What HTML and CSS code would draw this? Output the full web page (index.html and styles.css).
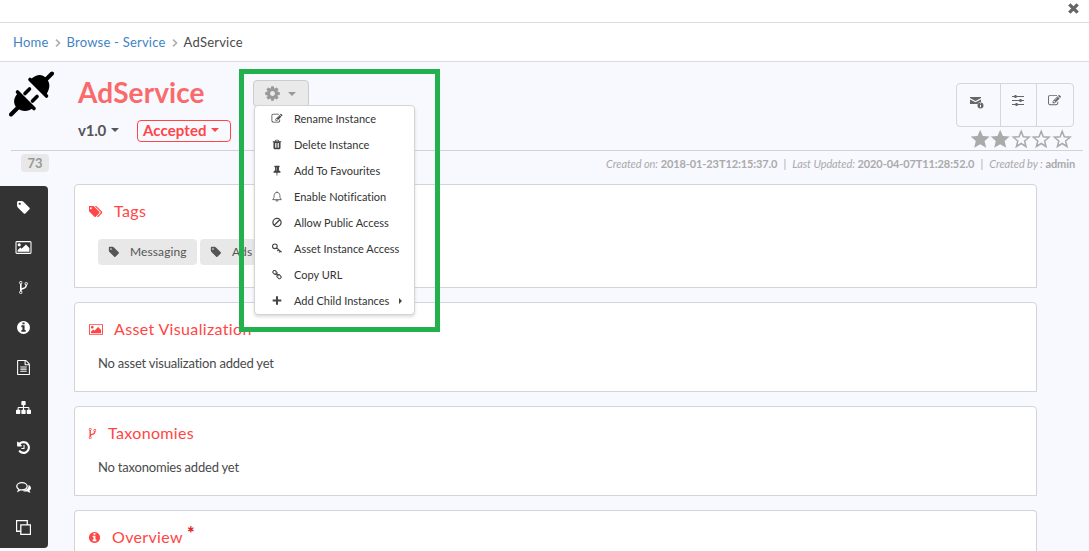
FILE: index.html
```
<!DOCTYPE html>
<html lang="en">
<head>
    <meta charset="UTF-8">
    <meta name="viewport" content="width=device-width, initial-scale=1.0">
    <title>AdService</title>
    <link rel="stylesheet" href="styles.css">
</head>
<body>
    <svg class="sprite">
        <symbol id="tag" viewBox="0 0 1792 1792"><path d="M576 448q0-53-37.500-90.500t-90.500-37.500-90.500 37.500-37.500 90.500 37.500 90.500 90.500 37.500 90.500-37.500 37.500-90.500zm1067 576q0 53-37 90l-491 492q-39 37-91 37-53 0-90-37l-715-716q-38-37-64.500-101t-26.500-117v-416q0-52 38-90t90-38h416q53 0 117 26.500t102 64.500l715 714q37 39 37 91z"/></symbol>
        <symbol id="tags" viewBox="0 0 1920 1792"><path d="M384 448q0-53-37.500-90.500t-90.500-37.500-90.500 37.500-37.500 90.500 37.500 90.500 90.500 37.500 90.500-37.500 37.500-90.500zm1067 576q0 53-37 90l-491 492q-39 37-91 37-53 0-90-37l-715-716q-38-37-64.500-101t-26.500-117v-416q0-52 38-90t90-38h416q53 0 117 26.500t102 64.500l715 714q37 39 37 91zm384 0q0 53-37 90l-491 492q-39 37-91 37-36 0-59-14t-53-45l470-470q37-37 37-90 0-52-37-91l-715-714q-38-38-102-64.500t-117-26.500h224q53 0 117 26.500t102 64.500l715 714q37 39 37 91z"/></symbol>
        <symbol id="image" viewBox="-64 0 1920 1792"><path d="M576 576q0 80-56 136t-136 56-136-56-56-136 56-136 136-56 136 56 56 136zm1024 384v448h-1408v-192l320-320 160 160 512-512zm96-704h-1600q-13 0-22.500 9.500t-9.500 22.500v1216q0 13 9.500 22.500t22.500 9.500h1600q13 0 22.500-9.500t9.500-22.500v-1216q0-13-9.500-22.500t-22.500-9.500zm160 32v1216q0 66-47 113t-113 47h-1600q-66 0-113-47t-47-113v-1216q0-66 47-113t113-47h1600q66 0 113 47t47 113z"/></symbol>
        <symbol id="fork" viewBox="0 0 1792 1792"><path d="M672 1472q0-40-28-68t-68-28-68 28-28 68 28 68 68 28 68-28 28-68zm0-1152q0-40-28-68t-68-28-68 28-28 68 28 68 68 28 68-28 28-68zm640 128q0-40-28-68t-68-28-68 28-28 68 28 68 68 28 68-28 28-68zm96 0q0 52-26 96.500t-70 69.500q-2 287-226 414-67 38-203 81-128 40-169.500 71t-41.500 100v26q44 25 70 69.500t26 96.500q0 80-56 136t-136 56-136-56-56-136q0-52 26-96.500t70-69.500v-820q-44-25-70-69.500t-26-96.500q0-80 56-136t136-56 136 56 56 136q0 52-26 96.500t-70 69.500v497q54-26 154-57 55-17 87.500-29.500t70.500-31 59-39.500 40.500-51 28-69.500 8.500-91.500q-44-25-70-69.500t-26-96.500q0-80 56-136t136-56 136 56 56 136z"/></symbol>
        <symbol id="info" viewBox="0 0 1792 1792"><path d="M1152 1376v-160q0-14-9-23t-23-9h-96v-512q0-14-9-23t-23-9h-320q-14 0-23 9t-9 23v160q0 14 9 23t23 9h96v320h-96q-14 0-23 9t-9 23v160q0 14 9 23t23 9h448q14 0 23-9t9-23zm-128-896v-160q0-14-9-23t-23-9h-192q-14 0-23 9t-9 23v160q0 14 9 23t23 9h192q14 0 23-9t9-23zm640 416q0 209-103 385.500t-279.500 279.500-385.500 103-385.500-103-279.500-279.500-103-385.500 103-385.500 279.500-279.500 385.500-103 385.500 103 279.500 279.500 103 385.500z"/></symbol>
        <symbol id="file" viewBox="0 0 1792 1792"><path d="M1596 380q28 28 48 76t20 88v1152q0 40-28 68t-68 28h-1344q-40 0-68-28t-28-68v-1600q0-40 28-68t68-28h896q40 0 88 20t76 48zm-444-244v376h376q-10-29-22-41l-313-313q-12-12-41-22zm384 1528v-1024h-416q-40 0-68-28t-28-68v-416h-768v1536h1280zm-1024-864q0-14 9-23t23-9h704q14 0 23 9t9 23v64q0 14-9 23t-23 9h-704q-14 0-23-9t-9-23v-64zm736 224q14 0 23 9t9 23v64q0 14-9 23t-23 9h-704q-14 0-23-9t-9-23v-64q0-14 9-23t23-9h704zm0 256q14 0 23 9t9 23v64q0 14-9 23t-23 9h-704q-14 0-23-9t-9-23v-64q0-14 9-23t23-9h704z"/></symbol>
        <symbol id="sitemap" viewBox="0 0 1792 1792"><path d="M1792 1248v320q0 40-28 68t-68 28h-320q-40 0-68-28t-28-68v-320q0-40 28-68t68-28h96v-192h-512v192h96q40 0 68 28t28 68v320q0 40-28 68t-68 28h-320q-40 0-68-28t-28-68v-320q0-40 28-68t68-28h96v-192h-512v192h96q40 0 68 28t28 68v320q0 40-28 68t-68 28h-320q-40 0-68-28t-28-68v-320q0-40 28-68t68-28h96v-192q0-52 38-90t90-38h512v-192h-96q-40 0-68-28t-28-68v-320q0-40 28-68t68-28h320q40 0 68 28t28 68v320q0 40-28 68t-68 28h-96v192h512q52 0 90 38t38 90v192h96q40 0 68 28t28 68z"/></symbol>
        <symbol id="history" viewBox="0 0 1792 1792"><path d="M1664 896q0 156-61 298t-164 245-245 164-298 61q-172 0-327-72.500t-264-204.500q-7-10-6.500-22.500t8.500-20.500l137-138q10-9 25-9 16 2 23 12 73 95 179 147t225 52q104 0 198.500-40.500t163.500-109.500 109.500-163.500 40.500-198.500-40.500-198.500-109.500-163.500-163.500-109.500-198.500-40.500q-98 0-188 35.500t-160 101.500l137 138q31 30 14 69-17 40-59 40h-448q-26 0-45-19t-19-45v-448q0-42 40-59 39-17 69 14l130 129q107-101 244.500-156.500t284.500-55.500q156 0 298 61t245 164 164 245 61 298zm-640-288v448q0 14-9 23t-23 9h-320q-14 0-23-9t-9-23v-64q0-14 9-23t23-9h224v-352q0-14 9-23t23-9h64q14 0 23 9t9 23z"/></symbol>
        <symbol id="comments" viewBox="0 0 14 14"><path d="M5.500 2.500C2.900 2.500.7 3.900.7 5.900c0 1.200.8 2.100 1.900 2.700L2 10.300l2.200-1.200c.4.100.9.100 1.300.1 2.700 0 4.900-1.300 4.900-3.300S8.200 2.500 5.500 2.500z" fill="none" stroke="currentColor" stroke-width="1.200"/><path d="M11.700 4.600c1.400.6 2.300 1.600 2.300 2.900 0 1-.6 1.800-1.500 2.400l1 1.900c-1 .1-2-.4-2.700-1.100-2.300.4-4.200-.1-5.100-.8 3.500 0 6.300-1.700 6-5.300z"/></symbol>
        <symbol id="copy" viewBox="0 0 14 14"><path d="M4.500 4.500h9v9h-9zM4.500 10.500h-4v-10h10v4" fill="none" stroke="currentColor" stroke-width="1.200"/></symbol>
        <symbol id="cog" viewBox="0 0 1792 1792"><path d="M1152 896q0-106-75-181t-181-75-181 75-75 181 75 181 181 75 181-75 75-181zm512-109v222q0 12-8 23t-20 13l-185 28q-19 54-39 91 35 50 107 138 10 12 10 25t-9 23q-27 37-99 108t-94 71q-12 0-26-9l-138-108q-44 23-91 38-16 136-29 186-7 28-36 28h-222q-14 0-24.500-8.500t-11.500-21.500l-28-184q-49-16-90-37l-141 107q-10 9-25 9-14 0-25-11-126-114-165-168-7-10-7-23 0-12 8-23 15-21 51-66.500t54-70.500q-27-50-41-99l-183-27q-13-2-21-12.500t-8-23.500v-222q0-12 8-23t19-13l186-28q14-46 39-92-40-57-107-138-10-12-10-24 0-10 9-23 26-36 98.500-107.500t94.500-71.500q13 0 26 10l138 107q44-23 91-38 16-136 29-186 7-28 36-28h222q14 0 24.500 8.500t11.500 21.500l28 184q49 16 90 37l142-107q9-9 24-9 13 0 25 10 129 119 165 170 7 8 7 22 0 12-8 23-15 21-51 66.500t-54 70.500q26 50 41 98l183 28q13 2 21 12.500t8 23.500z"/></symbol>
        <symbol id="edit" viewBox="0 0 1792 1792"><path d="M888 1184l116-116-152-152-116 116v56h96v96h56zm440-720q-16-16-33 1l-350 350q-17 17-1 33t33-1l350-350q17-17 1-33zm80 594v190q0 119-84.500 203.500t-203.500 84.500h-832q-119 0-203.500-84.500t-84.500-203.500v-832q0-119 84.500-203.500t203.500-84.500h832q63 0 117 25 15 7 18 23 3 17-9 29l-49 49q-14 14-32 8-23-6-45-6h-832q-66 0-113 47t-47 113v832q0 66 47 113t113 47h832q66 0 113-47t47-113v-126q0-13 9-22l64-64q15-15 35-7t20 29zm-96-738l288 288-672 672h-288v-288zm444 132l-92 92-288-288 92-92q28-28 68-28t68 28l152 152q28 28 28 68t-28 68z"/></symbol>
        <symbol id="trash" viewBox="0 0 1792 1792"><path d="M704 1376v-704q0-14-9-23t-23-9h-64q-14 0-23 9t-9 23v704q0 14 9 23t23 9h64q14 0 23-9t9-23zm256 0v-704q0-14-9-23t-23-9h-64q-14 0-23 9t-9 23v704q0 14 9 23t23 9h64q14 0 23-9t9-23zm256 0v-704q0-14-9-23t-23-9h-64q-14 0-23 9t-9 23v704q0 14 9 23t23 9h64q14 0 23-9t9-23zm-544-992h448l-48-117q-7-9-17-11h-317q-10 2-17 11zm928 32v64q0 14-9 23t-23 9h-96v948q0 83-47 143.500t-113 60.500h-832q-66 0-113-58.500t-47-141.500v-952h-96q-14 0-23-9t-9-23v-64q0-14 9-23t23-9h309l70-167q15-37 54-63t79-26h320q40 0 79 26t54 63l70 167h309q14 0 23 9t9 23z"/></symbol>
        <symbol id="pin" viewBox="0 0 1792 1792"><path d="M800 864v-448q0-14-9-23t-23-9-23 9-9 23v448q0 14 9 23t23 9 23-9 9-23zm672 352q0 26-19 45t-45 19h-429l-51 483q-2 12-10.500 20.500t-20.500 8.500h-1q-27 0-32-27l-76-485h-404q-26 0-45-19t-19-45q0-123 78.500-221.500t177.500-98.500v-512q-52 0-90-38t-38-90 38-90 90-38h640q52 0 90 38t38 90-38 90-90 38v512q99 0 177.500 98.500t78.500 221.500z"/></symbol>
        <symbol id="bell" viewBox="0 0 14 14"><path d="M7 .5v1.300M1.500 11h11C11 9.500 10.600 7.800 10.600 5.700 10.600 3.400 9.400 1.900 7 1.900S3.400 3.400 3.400 5.700C3.400 7.800 3 9.500 1.500 11zM5.600 11.500c0 .9.600 1.600 1.400 1.600s1.400-.7 1.400-1.600" fill="none" stroke="currentColor"/></symbol>
        <symbol id="ban" viewBox="0 0 14 14"><path d="M3.200 10.800l7.600-7.600M12.200 7A5.200 5.200 0 1 1 1.800 7a5.200 5.200 0 0 1 10.400 0z" fill="none" stroke="currentColor" stroke-width="1.600"/></symbol>
        <symbol id="key" viewBox="0 0 14 14"><path d="M7.300 4.200A3 3 0 1 1 1.300 4.200a3 3 0 0 1 6 0zM6.500 6.200l6.300 5.600M9 8.600l-1.500 1.800M11 10.300l-1.400 1.700" fill="none" stroke="currentColor" stroke-width="1.400"/></symbol>
        <symbol id="link" viewBox="0 0 14 14"><path d="M5.900 6.900L4.600 7.100 1.700 4.500 1.700 3.200 3.200 1.800 4.500 1.800 7.200 4.500 7.100 5.700 5.900 6.900M5 5l4 4M8.200 7l1.400-.1 2.700 2.800v1.300l-1.500 1.400H9.500L6.800 9.600V8.300z" fill="none" stroke="currentColor" stroke-width="1.300" stroke-linejoin="round"/></symbol>
        <symbol id="plus" viewBox="0 0 14 14"><path d="M7 1.500v11M1.500 7h11" fill="none" stroke="currentColor" stroke-width="2.600"/></symbol>
        <symbol id="star" viewBox="0 0 20 20"><path d="M10 .8l2.700 6.200 6.800.6-5.100 4.500 1.600 6.700L10 15.200l-6 3.600 1.600-6.700L.5 7.600 7.300 7z"/></symbol>
        <symbol id="star-o" viewBox="0 0 20 20"><path d="M10 2.300l2.100 5.400 5.800.5-4.500 3.800 1.400 5.500L10 14.500l-4.800 3 1.400-5.500-4.500-3.800 5.800-.5z" fill="none" stroke="currentColor" stroke-width="1.500"/></symbol>
        <symbol id="close" viewBox="0 0 10 10"><path d="M1.200 1.200l7.600 7.600M8.800 1.200L1.200 8.800" stroke="currentColor" stroke-width="3"/></symbol>
        <symbol id="mail" viewBox="0 0 14 13"><path d="M0 1h11v1L5.500 5 0 2zM0 3.400L5.500 6.200 11 3.400V6a3.600 3.600 0 0 0-3.500 2H0z"/><path d="M10.500 6.400a3 3 0 1 0 0 6 3 3 0 0 0 0-6zm-.5 1h1v.9h-1zm0 1.500h1v2.300h-1z"/></symbol>
        <symbol id="sliders" viewBox="0 0 12 11"><path d="M0 1.500h12M0 5.500h12M0 9.500h12" stroke="currentColor"/><path d="M2.500 0h2v3h-2zM7.500 4h2v3h-2zM3.500 8h2v3h-2z"/></symbol>
        <symbol id="caret" viewBox="0 0 8 4"><path d="M0 0h8L4 4z"/></symbol>
        <symbol id="chevron" viewBox="0 0 6 8"><path d="M1 .7L4.500 4 1 7.300" fill="none" stroke="currentColor" stroke-width="1.700"/></symbol>
        <symbol id="plug" viewBox="0 0 46 46"><path d="M2 43.500L9 36.500M36 9.500L43 2.500" stroke="currentColor" stroke-width="4" stroke-linecap="round"/><path d="M8.500 21L25 37.500M21 8.500L37.500 25" stroke="currentColor" stroke-width="3.600" stroke-linecap="round"/><path d="M9 22C4 27 4 33 8 37c5 4 11 4 16 0zM22 8c6-5 11-5 15-1 5 5 4 11 0 17z"/><path d="M16 22.500l4.500-4.500M23.500 30l4.500-4.500" stroke="currentColor" stroke-width="3.600" stroke-linecap="round"/></symbol>
    </svg>

    <div class="topbar"><svg class="close"><use href="#close"/></svg></div>
    <div class="breadcrumb">
        <a>Home</a>
        <svg><use href="#chevron"/></svg>
        <a>Browse - Service</a>
        <svg><use href="#chevron"/></svg>
        <span>AdService</span>
    </div>

    <div class="header">
        <svg class="plug"><use href="#plug"/></svg>
        <div class="title">
            <div class="title-row">
                <h1>AdService</h1>
                <div class="settings">
                    <svg class="cog"><use href="#cog"/></svg>
                    <svg class="caret"><use href="#caret"/></svg>
                    <div class="menu">
                        <div class="item"><svg><use href="#edit"/></svg><span>Rename Instance</span></div>
                        <div class="item"><svg><use href="#trash"/></svg><span>Delete Instance</span></div>
                        <div class="item"><svg><use href="#pin"/></svg><span>Add To Favourites</span></div>
                        <div class="item"><svg><use href="#bell"/></svg><span>Enable Notification</span></div>
                        <div class="item"><svg><use href="#ban"/></svg><span>Allow Public Access</span></div>
                        <div class="item"><svg><use href="#key"/></svg><span>Asset Instance Access</span></div>
                        <div class="item"><svg><use href="#link"/></svg><span>Copy URL</span></div>
                        <div class="item"><svg><use href="#plus"/></svg><span>Add Child Instances</span><i class="sub"></i></div>
                    </div>
                </div>
            </div>
            <div class="version-row">
                <span class="version">v1.0</span>
                <svg class="caret"><use href="#caret"/></svg>
                <div class="status"><span>Accepted</span><svg class="caret"><use href="#caret"/></svg></div>
            </div>
        </div>
        <div class="actions">
            <div class="buttons">
                <a class="b1"><svg class="mail"><use href="#mail"/></svg></a>
                <a class="b2"><svg class="sliders"><use href="#sliders"/></svg></a>
                <a class="b3"><svg class="edit"><use href="#edit"/></svg></a>
            </div>
            <div class="stars">
                <svg><use href="#star"/></svg>
                <svg><use href="#star"/></svg>
                <svg><use href="#star-o"/></svg>
                <svg><use href="#star-o"/></svg>
                <svg><use href="#star-o"/></svg>
            </div>
        </div>
    </div>

    <div class="meta">
        <span class="score">73</span>
        <div class="dates">
            <span><em>Created on:</em> <b>2018-01-23T12:15:37.0</b></span><u>|</u>
            <span><em>Last Updated:</em> <b>2020-04-07T11:28:52.0</b></span><u>|</u>
            <span><em>Created by :</em> <b>admin</b></span>
        </div>
    </div>

    <div class="main">
        <div class="sidebar">
            <a><svg><use href="#tag"/></svg></a>
            <a><svg class="wide"><use href="#image"/></svg></a>
            <a><svg><use href="#fork"/></svg></a>
            <a><svg><use href="#info"/></svg></a>
            <a><svg><use href="#file"/></svg></a>
            <a><svg><use href="#sitemap"/></svg></a>
            <a><svg><use href="#history"/></svg></a>
            <a><svg><use href="#comments"/></svg></a>
            <a><svg><use href="#copy"/></svg></a>
        </div>
        <div class="cards">
            <div class="card card-tags">
                <h2><svg class="wide"><use href="#tags"/></svg><span>Tags</span></h2>
                <div class="labels">
                    <span class="label"><svg><use href="#tag"/></svg><span>Messaging</span></span>
                    <span class="label"><svg><use href="#tag"/></svg><span>Ads</span></span>
                </div>
            </div>
            <div class="card">
                <h2><svg class="wide"><use href="#image"/></svg><span>Asset Visualization</span></h2>
                <p>No asset visualization added yet</p>
            </div>
            <div class="card">
                <h2><svg class="narrow"><use href="#fork"/></svg><span>Taxonomies</span></h2>
                <p>No taxonomies added yet</p>
            </div>
            <div class="card card-last">
                <h2><svg class="round"><use href="#info"/></svg><span>Overview</span><sup>*</sup></h2>
            </div>
        </div>
    </div>
    <div class="highlight"></div>
</body>
</html>
```
FILE: styles.css
```
*{
    box-sizing: border-box;
    margin: 0;
    padding: 0;
}
body{
    height: 551px;
    overflow: hidden;
    position: relative;
    background: #f8f8ff;
    color: #4a4a4a;
    font-family: Lato, sans-serif;
    font-size: 13px;
    font-variant-ligatures: none;
}
svg{
    display: block;
    flex: none;
    fill: currentColor;
}
.sprite{
    display: none;
}
.topbar{
    height: 23px;
    background: #fff;
    border-bottom: 1px solid #dcdcdf;
    display: flex;
    justify-content: flex-end;
    padding: 3px 10px 0 0;
}
.close{
    width: 11px;
    height: 11px;
    color: #666;
}
.breadcrumb{
    height: 39px;
    background: #fff;
    border-bottom: 1px solid #dcdcdf;
    display: flex;
    align-items: center;
    padding-left: 13px;
    letter-spacing: .22px;
}
.breadcrumb a{
    color: #4183c4;
}
.breadcrumb svg{
    width: 6px;
    height: 8px;
    margin: 2px 6px 0 6px;
    color: #b0b0b0;
}
.header{
    display: flex;
    height: 89px;
    margin: 0 6px 0 11px;
    border-bottom: 1px solid #d2d2d6;
}
.plug{
    width: 46px;
    height: 46px;
    margin: 9px 0 0 -2px;
    color: #000;
}
.title{
    margin-left: 23px;
}
.title-row{
    display: flex;
    height: 55px;
    padding-top: 16px;
}
h1{
    width: 175px;
    font-size: 28px;
    line-height: 29px;
    font-weight: bold;
    letter-spacing: .1px;
    color: #f96b6b;
}
.settings{
    position: relative;
    display: flex;
    align-items: center;
    width: 56px;
    height: 27px;
    margin-top: 2px;
    padding-left: 10px;
    border: 1px solid #ccc;
    border-radius: 4px;
    background: #eaeaea;
    color: #999;
}
.cog{
    width: 17px;
    height: 17px;
}
.caret{
    width: 8px;
    height: 4px;
}
.settings .caret{
    margin-left: 7px;
}
.menu{
    position: absolute;
    z-index: 5;
    left: 0;
    top: 24px;
    width: 161px;
    height: 210px;
    background: #fff;
    border: 1px solid #d4d4d5;
    border-radius: 4px;
    box-shadow: 0 2px 3px rgba(34, 36, 38, .15);
    color: #333;
}
.item{
    display: flex;
    align-items: center;
    height: 26px;
    padding: 0 0 2px 16px;
    font-size: 11px;
}
.item svg{
    width: 12px;
    height: 11px;
    margin-right: 11px;
    margin-top: 1px;
    color: #444;
}
.sub{
    margin: 2px 0 0 10px;
    border: 3px solid transparent;
    border-left-color: #444;
    border-right: 0;
}
.version-row{
    display: flex;
    align-items: center;
    height: 26px;
    color: #555;
    font-size: 15px;
    font-weight: bold;
}
.version{
    width: 29px;
    letter-spacing: -.2px;
}
.version-row .caret{
    margin-left: 4px;
}
.status{
    display: flex;
    align-items: center;
    width: 94px;
    height: 22px;
    margin: 1px 0 0 18px;
    padding: 0 0 1px 5px;
    border: 1px solid #ff4545;
    border-radius: 4px;
    color: #ff4545;
    letter-spacing: .1px;
}
.actions{
    margin: 21px 9px 0 auto;
}
.buttons{
    display: flex;
    width: 118px;
    height: 44px;
    border: 1px solid #d5d5da;
    border-radius: 4px;
    color: #666;
}
.buttons a{
    display: flex;
    justify-content: center;
    padding-top: 11px;
}
.buttons a + a{
    border-left: 1px solid #d5d5da;
}
.b1{
    width: 43px;
    padding-right: 3px;
}
.b2{
    width: 36px;
    padding-right: 1px;
}
.b3{
    width: 37px;
    padding-right: 1px;
}
.mail{
    width: 14px;
    height: 13px;
    margin-top: 1px;
}
.sliders{
    width: 12px;
    height: 11px;
}
.edit{
    width: 13px;
    height: 13px;
    margin-top: -1px;
}
.stars{
    display: flex;
    margin: 2px 0 0 14px;
    color: #aaa;
}
.stars svg{
    width: 20.4px;
    height: 20px;
}
.meta{
    display: flex;
    justify-content: space-between;
    height: 33px;
    padding: 3px 14px 0 21px;
}
.score{
    width: 28px;
    height: 18px;
    border-radius: 4px;
    background: #e8e8e8;
    color: #999;
    font-size: 13px;
    font-weight: bold;
    line-height: 18px;
    text-align: center;
}
.dates{
    display: flex;
    color: #aaa;
    font-size: 11px;
    line-height: 20px;
    letter-spacing: -.1px;
}
.dates u{
    width: 15px;
    text-align: center;
    text-decoration: none;
}
.main{
    display: flex;
    height: 367px;
    overflow: hidden;
}
.sidebar{
    width: 48px;
    height: 362px;
    margin-top: 2px;
    padding: 1px 1px 0 0;
    background: #333;
    border-radius: 0 4px 4px 0;
    color: #fff;
}
.sidebar a{
    display: flex;
    align-items: center;
    justify-content: center;
    height: 40px;
}
.sidebar svg{
    width: 15px;
    height: 15px;
}
.sidebar .wide{
    width: 17px;
    height: 15px;
}
.cards{
    width: 963px;
    margin-left: 26px;
}
.card{
    height: 90px;
    margin-bottom: 14px;
    padding: 15px 14px 0;
    background: #fff;
    border: 1px solid #d4d4d8;
    border-radius: 4px 4px 0 0;
}
.card-tags{
    height: 104px;
}
.card-last{
    height: 41px;
    margin-bottom: 0;
    border-bottom: 0;
}
h2{
    display: flex;
    align-items: center;
    height: 20px;
    color: #ff4545;
    font-size: 16px;
    font-weight: normal;
    letter-spacing: .35px;
}
h2 svg{
    width: 13px;
    height: 13px;
    margin-top: 3px;
}
h2 .wide{
    width: 14px;
    margin-right: 11px;
}
h2 .narrow{
    margin: 3px 9px 0 -3px;
}
h2 .round{
    margin: 3px 11px 0 -1px;
}
sup{
    margin: -6px 0 0 4px;
    color: #db2828;
    font-size: 18px;
    font-weight: 900;
}
.card p{
    padding: 16px 0 0 9px;
    font-size: 13px;
    line-height: 18px;
    letter-spacing: -.2px;
}
.labels{
    display: flex;
    gap: 3px;
    padding: 19px 0 0 9px;
}
.label{
    display: flex;
    align-items: center;
    width: 99px;
    height: 26px;
    padding: 0 0 1px 10px;
    background: #e8e8e8;
    border-radius: 4px;
    color: #555;
    font-size: 12px;
    letter-spacing: .1px;
}
.label svg{
    width: 12px;
    height: 12px;
    margin-right: 10px;
}
.highlight{
    position: absolute;
    z-index: 10;
    left: 239px;
    top: 69px;
    width: 201px;
    height: 263px;
    border: 5px solid #22b14c;
}
```
